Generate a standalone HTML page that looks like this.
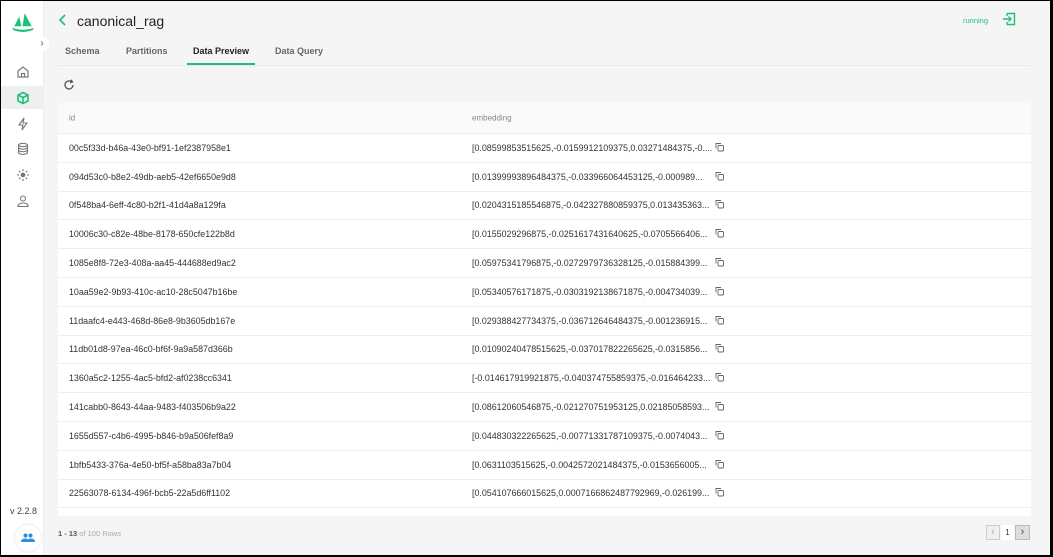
<!DOCTYPE html>
<html><head><meta charset="utf-8"><style>
*{box-sizing:border-box;margin:0;padding:0}
body{width:1053px;height:557px;overflow:hidden;background:#000;font-family:"Liberation Sans",sans-serif;position:relative}
#wrap{position:absolute;left:1px;top:1px;width:1049px;height:554px;background:#f5f5f5;overflow:hidden}
#side{position:absolute;left:0;top:0;width:43px;height:554px;background:#fff;border-right:1px solid #ececec}
.ic{position:absolute;left:0;width:43px;height:23px;display:flex;align-items:center;justify-content:center}
.act{background:#efefef}
#title{position:absolute;left:76px;top:12px;font-size:14px;color:#222}
.tab{position:absolute;top:45px;font-size:9px;color:#666;font-weight:bold}
#tbl{position:absolute;left:57px;top:102px;width:973px;height:413px;background:#fff}
.hd{height:31px;background:#fafafa;border-bottom:1px solid #eee;font-size:8px;color:#888;position:relative}
.row{height:28.8px;border-bottom:1px solid #eee;position:relative;font-size:8.9px;color:#333}
.c1{position:absolute;left:11px;top:50%;transform:translateY(-50%)}
.c2{position:absolute;left:414px;top:50%;transform:translateY(-50%)}
.cp{position:absolute;left:657px;top:50%;transform:translateY(-50%)}
</style></head><body><div id="wrap">
<div id="side">
<svg style="position:absolute;left:10px;top:9px" width="24" height="26" viewBox="0 0 22 24"><path d="M3 15 L7.5 6 L9.5 15 Z" fill="#1fbf7a"/><path d="M10.5 15 L12.5 3 L19 15 Z" fill="#1fbf7a"/><path d="M1 16.5 Q11 20 21 16.5 L20 18.5 Q11 22 2 18.5Z" fill="#1fbf7a"/></svg>
<div style="position:absolute;left:34px;top:36px;width:14px;height:14px;border-radius:7px;background:#fff;font-size:10px;color:#555;text-align:center;line-height:13px">&#8250;</div>
<div class="ic" style="top:59px"><svg width="14" height="14" viewBox="0 0 14 14" fill="none" stroke="#777" stroke-width="1.2"><path d="M2 6 L7 2 L12 6 V12 H2Z"/><path d="M5.5 12 V8.5 H8.5 V12"/></svg></div>
<div class="ic act" style="top:85px"><svg width="14" height="14" viewBox="0 0 14 14" fill="none" stroke="#1fbf7a" stroke-width="1.6"><path d="M7 1.5 L12 4 V10 L7 12.5 L2 10 V4Z M2 4 L7 6.5 L12 4 M7 6.5 V12.5"/></svg></div>
<div class="ic" style="top:111px"><svg width="14" height="14" viewBox="0 0 14 14" fill="none" stroke="#777" stroke-width="1.1"><path d="M8 1 L3 8 H7 L6 13 L11 6 H7Z"/></svg></div>
<div class="ic" style="top:136px"><svg width="14" height="14" viewBox="0 0 14 14" fill="none" stroke="#777" stroke-width="1.1"><ellipse cx="7" cy="3" rx="4.5" ry="1.6"/><path d="M2.5 3 V11 Q7 14 11.5 11 V3 M2.5 6 Q7 8.5 11.5 6 M2.5 8.5 Q7 11 11.5 8.5"/></svg></div>
<div class="ic" style="top:162px"><svg width="14" height="14" viewBox="0 0 14 14" stroke="#777" stroke-width="1.1"><circle cx="7" cy="7" r="1.8" fill="#777"/><path d="M7 1v2M7 11v2M1 7h2M11 7h2M3 3l1.3 1.3M9.7 9.7L11 11M11 3L9.7 4.3M4.3 9.7L3 11"/></svg></div>
<div class="ic" style="top:188px"><svg width="14" height="14" viewBox="0 0 14 14" fill="none" stroke="#777" stroke-width="1.1"><circle cx="7" cy="4.5" r="2.5"/><path d="M2 12.5 Q2 9 7 9 Q12 9 12 12.5Z"/></svg></div>
<div style="position:absolute;left:9px;top:505px;font-size:9px;color:#444">v 2.2.8</div>
<div style="position:absolute;left:14px;top:524px;width:26px;height:26px;border-radius:13px;background:#fff;box-shadow:0 0 3px #ddd;display:flex;align-items:center;justify-content:center"><svg width="14" height="10" viewBox="0 0 14 10" fill="#2a8fd6"><circle cx="4.5" cy="2.5" r="2"/><circle cx="9.5" cy="2.5" r="2"/><path d="M0 9 Q0 5.5 4.5 5.5 Q7 5.5 7 7 Q7 5.5 9.5 5.5 Q14 5.5 14 9Z"/></svg></div>
</div>
<svg style="position:absolute;left:57px;top:13px" width="10" height="12" viewBox="0 0 10 12"><path d="M7 1 L2 6 L7 11" fill="none" stroke="#1fbf7a" stroke-width="1.6"/></svg>
<div id="title">canonical_rag</div>
<div style="position:absolute;left:962px;top:15px;font-size:7.5px;color:#1fbf7a">running</div>
<svg style="position:absolute;left:1001px;top:11px" width="14" height="14" viewBox="0 0 14 14" fill="none" stroke="#1fbf7a" stroke-width="1.4"><path d="M5 1.5 H12.5 V12.5 H5 M5 4 V1.5 M5 10 V12.5"/><path d="M1 7 H9 M6.5 4.5 L9 7 L6.5 9.5"/></svg>
<div style="position:absolute;left:57px;top:64px;width:973px;height:1px;background:#e8e8e8"></div>
<div class="tab" style="left:64px">Schema</div>
<div class="tab" style="left:125px">Partitions</div>
<div class="tab" style="left:192px;color:#222">Data Preview</div>
<div class="tab" style="left:274px">Data Query</div>
<div style="position:absolute;left:186px;top:62px;width:68px;height:2px;background:#1fbf7a"></div>
<svg style="position:absolute;left:62px;top:78px" width="12" height="12" viewBox="0 0 12 12" fill="none" stroke="#555" stroke-width="1.3"><path d="M10 6 A4 4 0 1 1 8.5 2.8"/><path d="M8 0.8 L9.5 3 L7 3.8" /></svg>
<div id="tbl">
<div class="hd"><span class="c1">id</span><span class="c2">embedding</span></div>
<div id="rows"></div>
</div>
<div style="position:absolute;left:57px;top:528px;font-size:7.5px;color:#333"><b style="color:#555">1 - 13</b> <span style="color:#aaa">of 100 Rows</span></div>
<div style="position:absolute;left:985px;top:524px;width:14px;height:15px;border:1px solid #ccc;background:#f0f0f0;font-size:11px;color:#aaa;text-align:center;line-height:13px">&#8249;</div>
<div style="position:absolute;left:1000px;top:524px;width:13px;height:15px;background:#fff;font-size:8px;color:#333;text-align:center;line-height:15px">1</div>
<div style="position:absolute;left:1014px;top:524px;width:15px;height:15px;border:1px solid #bbb;background:#ddd;font-size:11px;color:#444;text-align:center;line-height:13px">&#8250;</div>
</div>
<script>
var d=[["00c5f33d-b46a-43e0-bf91-1ef2387958e1","[0.08599853515625,-0.0159912109375,0.03271484375,-0...."],
["094d53c0-b8e2-49db-aeb5-42ef6650e9d8","[0.01399993896484375,-0.033966064453125,-0.000989..."],
["0f548ba4-6eff-4c80-b2f1-41d4a8a129fa","[0.0204315185546875,-0.042327880859375,0.013435363..."],
["10006c30-c82e-48be-8178-650cfe122b8d","[0.0155029296875,-0.0251617431640625,-0.0705566406..."],
["1085e8f8-72e3-408a-aa45-444688ed9ac2","[0.05975341796875,-0.0272979736328125,-0.015884399..."],
["10aa59e2-9b93-410c-ac10-28c5047b16be","[0.05340576171875,-0.0303192138671875,-0.004734039..."],
["11daafc4-e443-468d-86e8-9b3605db167e","[0.029388427734375,-0.036712646484375,-0.001236915..."],
["11db01d8-97ea-46c0-bf6f-9a9a587d366b","[0.01090240478515625,-0.037017822265625,-0.0315856..."],
["1360a5c2-1255-4ac5-bfd2-af0238cc6341","[-0.014617919921875,-0.040374755859375,-0.016464233..."],
["141cabb0-8643-44aa-9483-f403506b9a22","[0.08612060546875,-0.021270751953125,0.02185058593..."],
["1655d557-c4b6-4995-b846-b9a506fef8a9","[0.044830322265625,-0.00771331787109375,-0.0074043..."],
["1bfb5433-376a-4e50-bf5f-a58ba83a7b04","[0.0631103515625,-0.0042572021484375,-0.0153656005..."],
["22563078-6134-496f-bcb5-22a5d6ff1102","[0.054107666015625,0.0007166862487792969,-0.026199..."]];
var cp='<svg width="9" height="9" viewBox="0 0 9 9" fill="none" stroke="#666" stroke-width="0.9"><rect x="3" y="3" width="5.5" height="5.5" rx="1"/><path d="M1 6 V1 H6"/></svg>';
var h='';d.forEach(function(r){h+='<div class="row"><span class="c1">'+r[0]+'</span><span class="c2">'+r[1]+'</span><span class="cp">'+cp+'</span></div>'});
document.getElementById('rows').innerHTML=h;
</script>
</body></html>
